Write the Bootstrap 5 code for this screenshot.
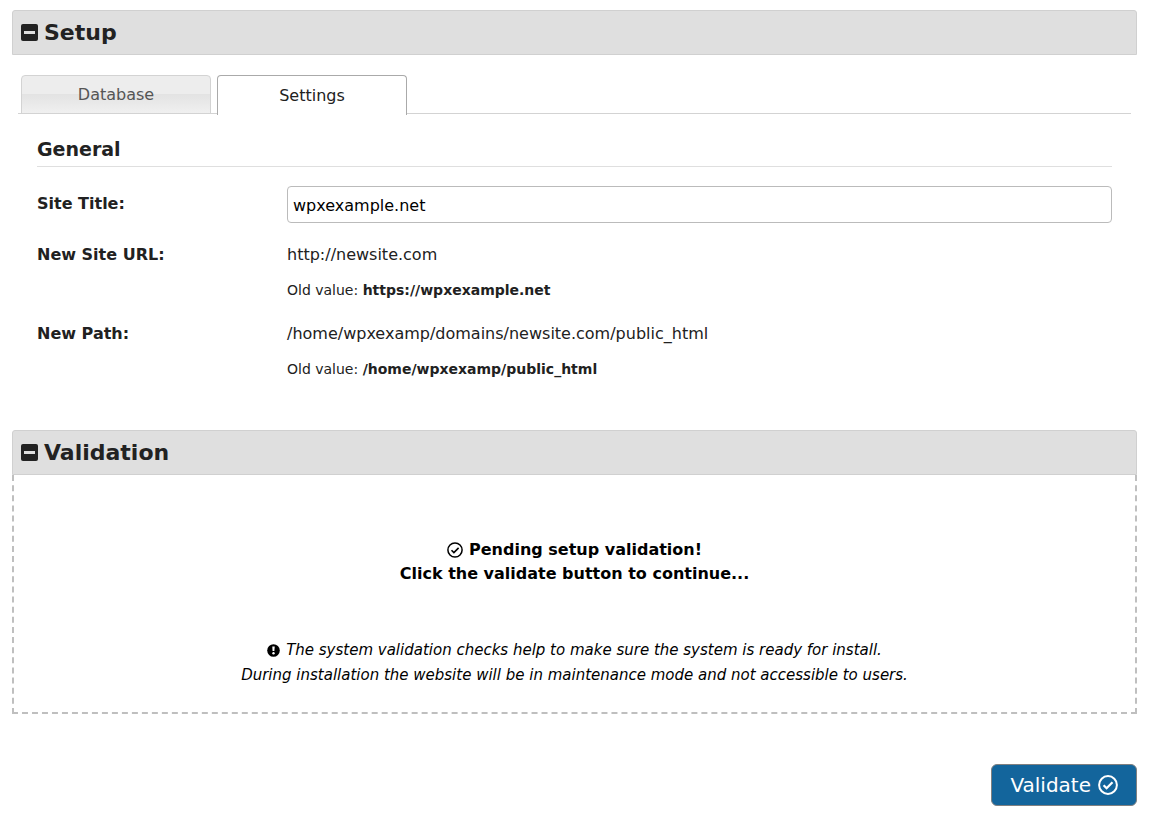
<!DOCTYPE html>
<html lang="en">
<head>
<meta charset="utf-8">
<meta name="viewport" content="width=device-width, initial-scale=1">
<title>Setup</title>
<link href="https://cdn.jsdelivr.net/npm/bootstrap@5.3.0/dist/css/bootstrap.min.css" rel="stylesheet">
<style>
  body { font-family: Verdana, "DejaVu Sans", sans-serif; font-size: 16px; line-height: 24px; color: #212121; background: #fff; }
  .wizard { padding: 10px 17px 16px 12px; }
  .section-bar { height: 45px; padding: 0 8px; background: #dfdfdf; border: 1px solid #d0d0d0; border-radius: 3px 3px 0 0; font-size: 22px; line-height: 43px; color: #222; gap: 6px; text-align: left; }
  .setup-tabs { margin: 20px 6px 0; padding-left: 3px; gap: 6px; border-bottom: 1px solid #d3d3d3; }
  .setup-tabs .nav-link { width: 190px; height: 39px; margin-bottom: -1px; padding: 0; border: 1px solid #d3d3d3; border-radius: 4px 4px 0 0; color: #555; line-height: 38px; background: linear-gradient(#ededed 50%, #e3e3e3 50%, #f0f0f0); }
  .setup-tabs .nav-link.active { height: 40px; margin-bottom: -2px; border-color: #aaa; border-bottom: 0; background: #fff; color: #212121; }
  .panel-body { padding: 23px 25px 0; }
  .group-title { margin: 0 0 19px; padding-bottom: 4px; border-bottom: 1px solid #dfdfdf; font-size: 19px; line-height: 25px; font-weight: 700; color: #222; }
  .settings-grid { display: grid; grid-template-columns: 250px 1fr; margin: 0; }
  .settings-grid .name { font-weight: 700; }
  .title-row { line-height: 36px; }
  .title-row input { height: 37px; padding: 1px 5px 0; border: 1px solid #bbb; border-radius: 4px; font-size: 16px; color: #000; }
  .value-row { margin-top: 20px; }
  .old-value { margin-top: 12px; font-size: 14px; line-height: 23px; }
  .validation { margin-top: 49px; }
  .pending { height: 239px; padding: 63px 16px 0; border: 2px dashed #bfbfbf; border-top: 0; color: #000; }
  .pending-note { margin-top: 52px; font-size: 15px; line-height: 25px; }
  .icon-line { gap: 6px; }
  .actions { margin-top: 50px; }
  .btn-validate { height: 42px; padding: 0 18px; gap: 7px; border: 1px solid #808080; border-radius: 6px; background: #13659c; color: #fff; font-size: 20px; line-height: 40px; }
  .btn-validate:hover { background: #0f5584; color: #fff; }
  svg { flex: none; }
</style>
</head>
<body>
<main class="wizard">
  <section>
    <button type="button" class="section-bar w-100 d-flex align-items-center fw-bold" data-bs-toggle="collapse" data-bs-target="#setup" aria-expanded="true">
      <svg width="17" height="17" viewBox="0 0 17 17" aria-hidden="true"><rect width="17" height="17" rx="2" fill="#222"/><path d="M3 7h11v3H3z" fill="#dfdfdf"/></svg>
      <span>Setup</span>
    </button>
    <div id="setup" class="collapse show">
      <div class="setup-tabs nav flex-nowrap" role="tablist">
        <button type="button" class="nav-link" role="tab" aria-selected="false">Database</button>
        <button type="button" class="nav-link active" role="tab" aria-selected="true" aria-controls="settings">Settings</button>
      </div>
      <div id="settings" class="panel-body" role="tabpanel">
        <h2 class="group-title">General</h2>
        <div class="settings-grid title-row">
          <label class="name" for="site-title">Site Title:</label>
          <div><input type="text" class="w-100 d-block" id="site-title" value="wpxexample.net"></div>
        </div>
        <dl class="settings-grid value-row">
          <dt class="name">New Site URL:</dt>
          <dd class="m-0">http://newsite.com<div class="old-value">Old value: <b>https://wpxexample.net</b></div></dd>
        </dl>
        <dl class="settings-grid value-row">
          <dt class="name">New Path:</dt>
          <dd class="m-0">/home/wpxexamp/domains/newsite.com/public_html<div class="old-value">Old value: <b>/home/wpxexamp/public_html</b></div></dd>
        </dl>
      </div>
    </div>
  </section>

  <section class="validation">
    <button type="button" class="section-bar w-100 d-flex align-items-center fw-bold" data-bs-toggle="collapse" data-bs-target="#validation" aria-expanded="true">
      <svg width="17" height="17" viewBox="0 0 17 17" aria-hidden="true"><rect width="17" height="17" rx="2" fill="#222"/><path d="M3 7h11v3H3z" fill="#dfdfdf"/></svg>
      <span>Validation</span>
    </button>
    <div id="validation" class="collapse show">
      <div class="pending text-center">
        <div class="fw-bold">
          <div class="icon-line d-flex justify-content-center align-items-center">
            <svg width="16" height="16" viewBox="0 0 16 16" fill="none" stroke="#000" aria-hidden="true"><circle cx="8" cy="8" r="7.1" stroke-width="1.5"/><path d="M4.5 8.2l2.4 2.4 4.7-4.7" stroke-width="1.6"/></svg>
            <span>Pending setup validation!</span>
          </div>
          <div>Click the validate button to continue...</div>
        </div>
        <div class="pending-note fst-italic">
          <div class="icon-line d-flex justify-content-center align-items-center">
            <svg width="13" height="13" viewBox="0 0 13 13" aria-hidden="true"><circle cx="6.500" cy="6.500" r="6.300"/><path d="M5.300 2.600h2.400l-.3 4.300H5.600z" fill="#fff"/><circle cx="6.500" cy="9.200" r="1.200" fill="#fff"/></svg>
            <span>The system validation checks help to make sure the system is ready for install.</span>
          </div>
          <div>During installation the website will be in maintenance mode and not accessible to users.</div>
        </div>
      </div>
    </div>
  </section>

  <div class="actions d-flex justify-content-end">
    <button type="button" class="btn btn-validate d-flex align-items-center">
      <span>Validate</span>
      <svg width="20" height="20" viewBox="0 0 20 20" fill="none" stroke="#fff" aria-hidden="true"><circle cx="10" cy="10" r="8.900" stroke-width="2"/><path d="M5.600 10.200l3 3 5.900-5.900" stroke-width="2.300"/></svg>
    </button>
  </div>
</main>
<script src="https://cdn.jsdelivr.net/npm/bootstrap@5.3.0/dist/js/bootstrap.bundle.min.js"></script>
</body>
</html>
